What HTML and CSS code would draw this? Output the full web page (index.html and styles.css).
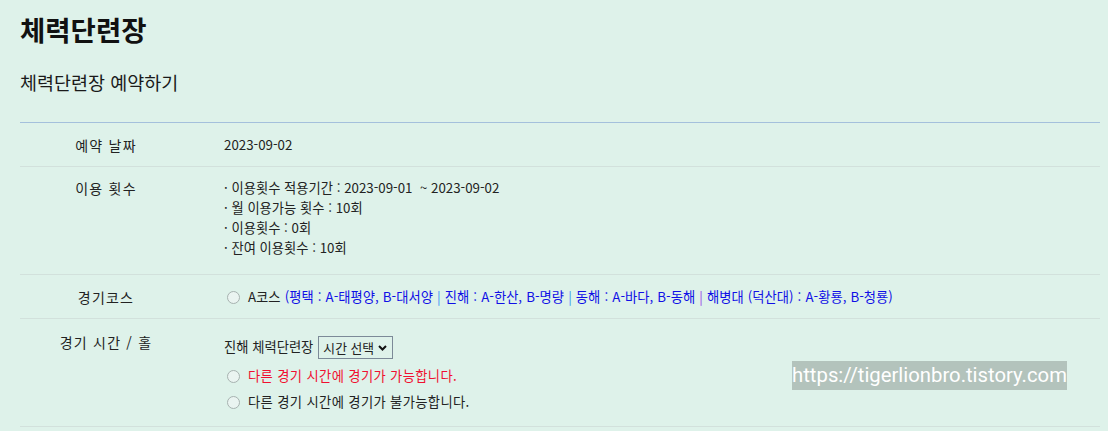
FILE: index.html
```html
<!DOCTYPE html>
<html lang="ko">
<head>
<meta charset="utf-8">
<title>체력단련장 예약하기</title>
<link rel="stylesheet" href="styles.css">
</head>
<body>
<div class="page">
  <h1 class="title">체력단련장</h1>
  <h2 class="subtitle">체력단련장 예약하기</h2>
  <div class="form">
    <div class="row">
      <div class="label">예약 날짜</div>
      <div class="value">2023-09-02</div>
    </div>
    <div class="row row-multi">
      <div class="label">이용 횟수</div>
      <div class="value">
        <div class="line">· 이용횟수 적용기간 : 2023-09-01 &nbsp;~ 2023-09-02</div>
        <div class="line">· 월 이용가능 횟수 : 10회</div>
        <div class="line">· 이용횟수 : 0회</div>
        <div class="line">· 잔여 이용횟수 : 10회</div>
      </div>
    </div>
    <div class="row">
      <div class="label">경기코스</div>
      <div class="value value-course">
        <label class="opt"><input type="radio" name="course" class="radio"><span>A코스 <span class="course">(평택 : A-태평양, B-대서양 <span class="sep">|</span> 진해 : A-한산, B-명량 <span class="sep">|</span> 동해 : A-바다, B-동해 <span class="sep sep-alt">|</span> 해병대 (덕산대) : A-황룡, B-청룡)</span></span></label>
      </div>
    </div>
    <div class="row row-time">
      <div class="label label-time">경기 시간 / 홀</div>
      <div class="value">
        <div class="select-line">
          <span>진해 체력단련장</span>
          <span class="select-wrap">
            <select class="select"><option>시간 선택</option></select>
            <svg class="chevron" width="9" height="6" viewBox="0 0 9 6"><path d="M1 1 L4.5 4.5 L8 1" fill="none" stroke="#111" stroke-width="2"/></svg>
          </span>
        </div>
        <label class="opt opt-line"><input type="radio" name="other" class="radio"><span class="red">다른 경기 시간에 경기가 가능합니다.</span></label>
        <label class="opt opt-line"><input type="radio" name="other" class="radio"><span>다른 경기 시간에 경기가 불가능합니다.</span></label>
      </div>
    </div>
  </div>
  <div class="watermark">https://tigerlionbro.tistory.com</div>
</div>
</body>
</html>
```
FILE: styles.css
```css
html, body {
  margin: 0;
  padding: 0;
  background: #def2ea;
}
body {
  font-family: "Noto Sans CJK KR", "Noto Sans", sans-serif;
  color: #222;
}
.page {
  position: relative;
  padding: 12px 8px 0 20px;
  min-height: 431px;
  box-sizing: border-box;
}
.title {
  margin: 0;
  font-size: 27.5px;
  line-height: 34px;
  font-weight: 700;
  color: #111;
}
.subtitle {
  margin: 23px 0 0;
  font-size: 18.5px;
  line-height: 26px;
  font-weight: 400;
  color: #1a1a1a;
}
.form {
  margin-top: 27px;
  border-top: 1px solid #a4c0dc;
}
.row {
  display: grid;
  grid-template-columns: 172px 1fr;
  align-items: start;
  padding: 12px 0 11px;
  border-bottom: 1px solid #d2e1dc;
  font-size: 14px;
  line-height: 20px;
}
.row-multi {
  padding: 11px 0 16px;
}
.row-time {
  padding: 12px 0 11px;
}
.label {
  text-align: center;
  letter-spacing: 1.2px;
  color: #222;
}
.label-time {
  padding-top: 1px;
}
.value {
  padding-left: 32px;
  font-size: 13.3px;
  color: #222;
}
.value-course {
  word-spacing: 0.4px;
}
.line {
  height: 20px;
}
.opt {
  display: flex;
  align-items: center;
  height: 20px;
}
.opt-line {
  height: 26px;
  letter-spacing: 0.35px;
}
.radio {
  appearance: none;
  -webkit-appearance: none;
  width: 13px;
  height: 13px;
  margin: 0 8px 0 3px;
  border: 1px solid #a7b2b0;
  border-radius: 50%;
  background: #eaf4f1;
  box-sizing: border-box;
  flex: none;
}
.course {
  color: #1010e6;
}
.sep {
  color: #3b98f5;
}
.sep-alt {
  color: #9d45e6;
}
.red {
  color: #f01030;
}
.select-line {
  display: flex;
  align-items: center;
  height: 32px;
  gap: 5px;
}
.select-wrap {
  position: relative;
  display: inline-block;
}
.select {
  appearance: none;
  -webkit-appearance: none;
  width: 75px;
  height: 23px;
  padding: 0 0 0 4px;
  border: 1px solid #7c8a98;
  border-radius: 0;
  background: transparent;
  font-family: "Noto Sans CJK KR", "Noto Sans", sans-serif;
  font-size: 12.8px;
  color: #222;
  display: block;
}
.chevron {
  position: absolute;
  right: 6px;
  top: 9px;
  pointer-events: none;
}
.watermark {
  position: absolute;
  left: 792px;
  top: 361px;
  width: 275px;
  height: 29px;
  background: #b3c3bc;
  color: #fff;
  font-family: Roboto, "Noto Sans", sans-serif;
  font-size: 20.3px;
  line-height: 29px;
  text-align: center;
  white-space: nowrap;
}
```
